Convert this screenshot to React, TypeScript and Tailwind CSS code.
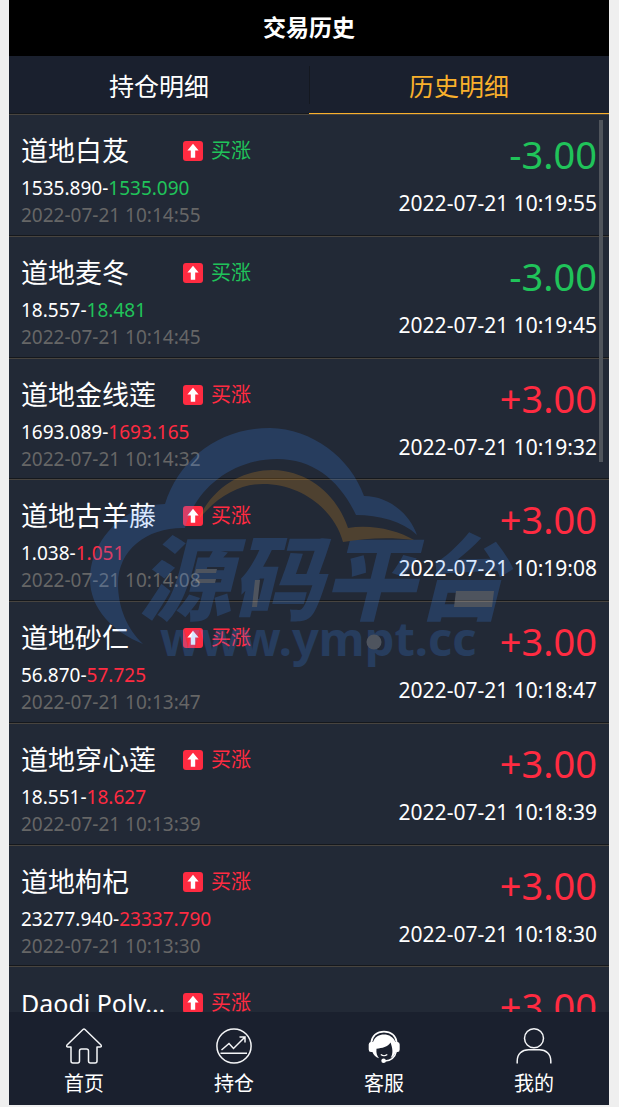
import React from "react";

type Trade = {
  name: string;
  open: string;
  close: string;
  openedAt: string;
  closedAt: string;
  amount: string;
};

const trades: Trade[] = [
  { name: "道地白芨", open: "1535.890", close: "1535.090", openedAt: "2022-07-21 10:14:55", closedAt: "2022-07-21 10:19:55", amount: "-3.00" },
  { name: "道地麦冬", open: "18.557", close: "18.481", openedAt: "2022-07-21 10:14:45", closedAt: "2022-07-21 10:19:45", amount: "-3.00" },
  { name: "道地金线莲", open: "1693.089", close: "1693.165", openedAt: "2022-07-21 10:14:32", closedAt: "2022-07-21 10:19:32", amount: "+3.00" },
  { name: "道地古羊藤", open: "1.038", close: "1.051", openedAt: "2022-07-21 10:14:08", closedAt: "2022-07-21 10:19:08", amount: "+3.00" },
  { name: "道地砂仁", open: "56.870", close: "57.725", openedAt: "2022-07-21 10:13:47", closedAt: "2022-07-21 10:18:47", amount: "+3.00" },
  { name: "道地穿心莲", open: "18.551", close: "18.627", openedAt: "2022-07-21 10:13:39", closedAt: "2022-07-21 10:18:39", amount: "+3.00" },
  { name: "道地枸杞", open: "23277.940", close: "23337.790", openedAt: "2022-07-21 10:13:30", closedAt: "2022-07-21 10:18:30", amount: "+3.00" },
  { name: "Daodi Poly...", open: "", close: "", openedAt: "", closedAt: "", amount: "+3.00" },
];

function UpIcon() {
  return (
    <svg viewBox="0 0 20 20" className="size-5 shrink-0" aria-hidden="true">
      <rect width="20" height="20" rx="3" fill="#ff2b41" />
      <path d="M10 2.8 15.6 9.4H12.2V16.8H7.8V9.4H4.4Z" fill="#fff" />
    </svg>
  );
}

function TradeRow({ trade }: { trade: Trade }) {
  const tone = trade.amount.startsWith("-") ? "text-[#20c35a]" : "text-[#ff2b41]";
  const nameSize = /^[A-Za-z]/.test(trade.name) ? "text-[25px]" : "text-[27px]";
  return (
    <li className="flex min-h-[11vh] shrink-0 justify-between border-t border-b border-t-[#48443f] border-b-[#15181d] px-3">
      <div className="pt-4">
        <div className="flex h-10 items-center">
          <span className={`w-[162px] truncate leading-10 text-white ${nameSize}`}>{trade.name}</span>
          <UpIcon />
          <span className={`ml-2 text-xl ${tone}`}>买涨</span>
        </div>
        {trade.open && (
          <>
            <p className="mt-1 text-[19px] leading-[27px] text-white">
              {trade.open}-<span className={tone}>{trade.close}</span>
            </p>
            <p className="text-[19px] leading-[27px] text-[#666666]">{trade.openedAt}</p>
          </>
        )}
      </div>
      <div className="pt-4 text-right">
        <p className={`text-[38px] leading-[46px] ${tone}`}>{trade.amount}</p>
        <p className="mt-3 text-[21px] leading-[28px] text-white">{trade.closedAt}</p>
      </div>
    </li>
  );
}

function Watermark() {
  return (
    <svg
      viewBox="90 426 430 246"
      className="pointer-events-none absolute top-[312px] left-[81px] h-[246px] w-[430px] opacity-20"
      aria-hidden="true"
    >
      <g fill="#3b8cfe">
        <path d="M143 644C113 632 90 609 90 579C90 541 124 504 165 504C179 460 218 428 270 428C312 429 350 457 364 496C387 496 409 512 417 535C402 521 379 515 356 515C340 481 314 459 277 459C232 459 195 489 185 528C148 527 118 549 118 584C118 607 127 629 143 644Z" />
        <text x="139" y="613" className="font-['Noto_Sans_CJK_SC',sans-serif] text-[92px] font-black italic">源码平台</text>
        <text x="160" y="656" className="font-['Noto_Sans',sans-serif] text-[47px] font-bold">www.ympt.cc</text>
      </g>
      <path fill="#fea019" d="M198 520C211 490 239 470 273 470C309 471 337 495 348 528C371 524 397 530 414 540C390 537 366 538 343 542C334 509 301 484 263 484C238 484 216 498 198 520Z" />
      <g fill="#fff">
        <path d="M196 569H217L216 573H195ZM196 579H216L215 583H195ZM255 580H260L257 607H252ZM456 591H494L492 607H454Z" />
        <circle cx="374" cy="642" r="7.5" />
      </g>
    </svg>
  );
}

function HomeIcon() {
  return (
    <svg viewBox="0 0 36 36" className="size-9" fill="none" stroke="#f4f5f7" strokeWidth="1.5" strokeLinejoin="round" aria-hidden="true">
      <path d="M17 1.5Q18 .6 19 1.5L35 17Q36 19 34 19H31V33Q31 35 29 35H24.5Q22.5 35 22.5 33V23Q22.5 21 20.5 21H15.5Q13.5 21 13.5 23V33Q13.5 35 11.5 35H7Q5 35 5 33V19H2Q0 19 1 17Z" />
    </svg>
  );
}

function ChartIcon() {
  return (
    <svg viewBox="0 0 36 36" className="size-9" fill="none" stroke="#f4f5f7" strokeWidth="1.5" aria-hidden="true">
      <circle cx="18" cy="18" r="17.1" />
      <path d="M4.5 25.3H31M5.5 22 13 15.5 17.5 20.5 28.5 9.5M23.5 9H29V14.5" />
    </svg>
  );
}

function SupportIcon() {
  return (
    <svg viewBox="0 0 36 36" className="size-9" aria-hidden="true">
      <g fill="none" stroke="#fff">
        <path d="M5.2 15C6 7.5 11.3 3.6 18 3.6S30 7.5 30.8 15" strokeWidth="1.7" />
        <path d="M30.5 23C29 29 25 32.8 19 33" strokeWidth="1.4" />
        <path d="M14.8 26.5Q18 29 21.3 26.5" strokeWidth="1.2" />
      </g>
      <path fill="#fff" d="M7 14C9 8.7 13 6.5 18 6.5S27.5 9 29.4 14H31.5Q33.7 14 33.7 16.5V21.5Q33.7 24 31.5 24H29.6C28.5 27 27 28.8 24.7 30C27.5 25 26.5 20 24.5 14.5C22 19 16 20 10.5 20.8C10 25 11 28 13 30.2C9.5 29 7.5 27 6.4 24H5Q2.7 24 2.7 21.5V16.5Q2.7 14 5 14Z" />
      <circle cx="17.6" cy="32.7" r="2.3" fill="#fff" />
    </svg>
  );
}

function UserIcon() {
  return (
    <svg viewBox="0 0 36 36" className="size-9" fill="none" stroke="#f4f5f7" strokeWidth="1.5" aria-hidden="true">
      <circle cx="18" cy="10.3" r="9.5" />
      <path d="M1.2 35.5V33C1.2 26 6 21.8 12.5 21.8H23.5C30 21.8 34.8 26 34.8 33V35.5" />
    </svg>
  );
}

const navItems = [
  { label: "首页", Icon: HomeIcon },
  { label: "持仓", Icon: ChartIcon },
  { label: "客服", Icon: SupportIcon },
  { label: "我的", Icon: UserIcon },
];

export default function App() {
  return (
    <div className="h-screen bg-[#efefef] pr-[10px] pb-0.5 pl-[9px] font-['Noto_Sans','Noto_Sans_CJK_SC',sans-serif]">
      <div className="flex h-full flex-col bg-[#222936]">
        <header className="flex h-14 shrink-0 items-center justify-center bg-black pb-0.5">
          <h1 className="text-[23px] font-bold text-white">交易历史</h1>
        </header>
        <div className="grid h-[58px] shrink-0 grid-cols-2 bg-[#1a202e]" role="tablist">
          <button role="tab" aria-selected="false" className="flex items-center justify-center border-b border-[#15181d] pt-1 text-[25px] text-white">
            持仓明细
          </button>
          <button role="tab" aria-selected="true" className="relative flex items-center justify-center border-b border-[#f9b02c] pt-1 text-[25px] text-[#f9b02c]">
            <span className="absolute top-2.5 left-0 h-[38px] w-px bg-[#141820]" />
            历史明细
          </button>
        </div>
        <main className="relative min-h-0 flex-1 overflow-hidden">
          <ul className="flex flex-col">
            {trades.map((trade) => (
              <TradeRow key={trade.name} trade={trade} />
            ))}
          </ul>
          <Watermark />
          <div className="absolute top-1.5 right-1.5 h-[342px] w-1 bg-[#50555c]" />
        </main>
        <nav className="grid h-[93px] shrink-0 grid-cols-4 bg-[#1a202e]">
          {navItems.map(({ label, Icon }) => (
            <a key={label} href="#" className="flex flex-col items-center pt-4 text-white">
              <Icon />
              <span className="mt-1 text-xl leading-8">{label}</span>
            </a>
          ))}
        </nav>
      </div>
    </div>
  );
}
